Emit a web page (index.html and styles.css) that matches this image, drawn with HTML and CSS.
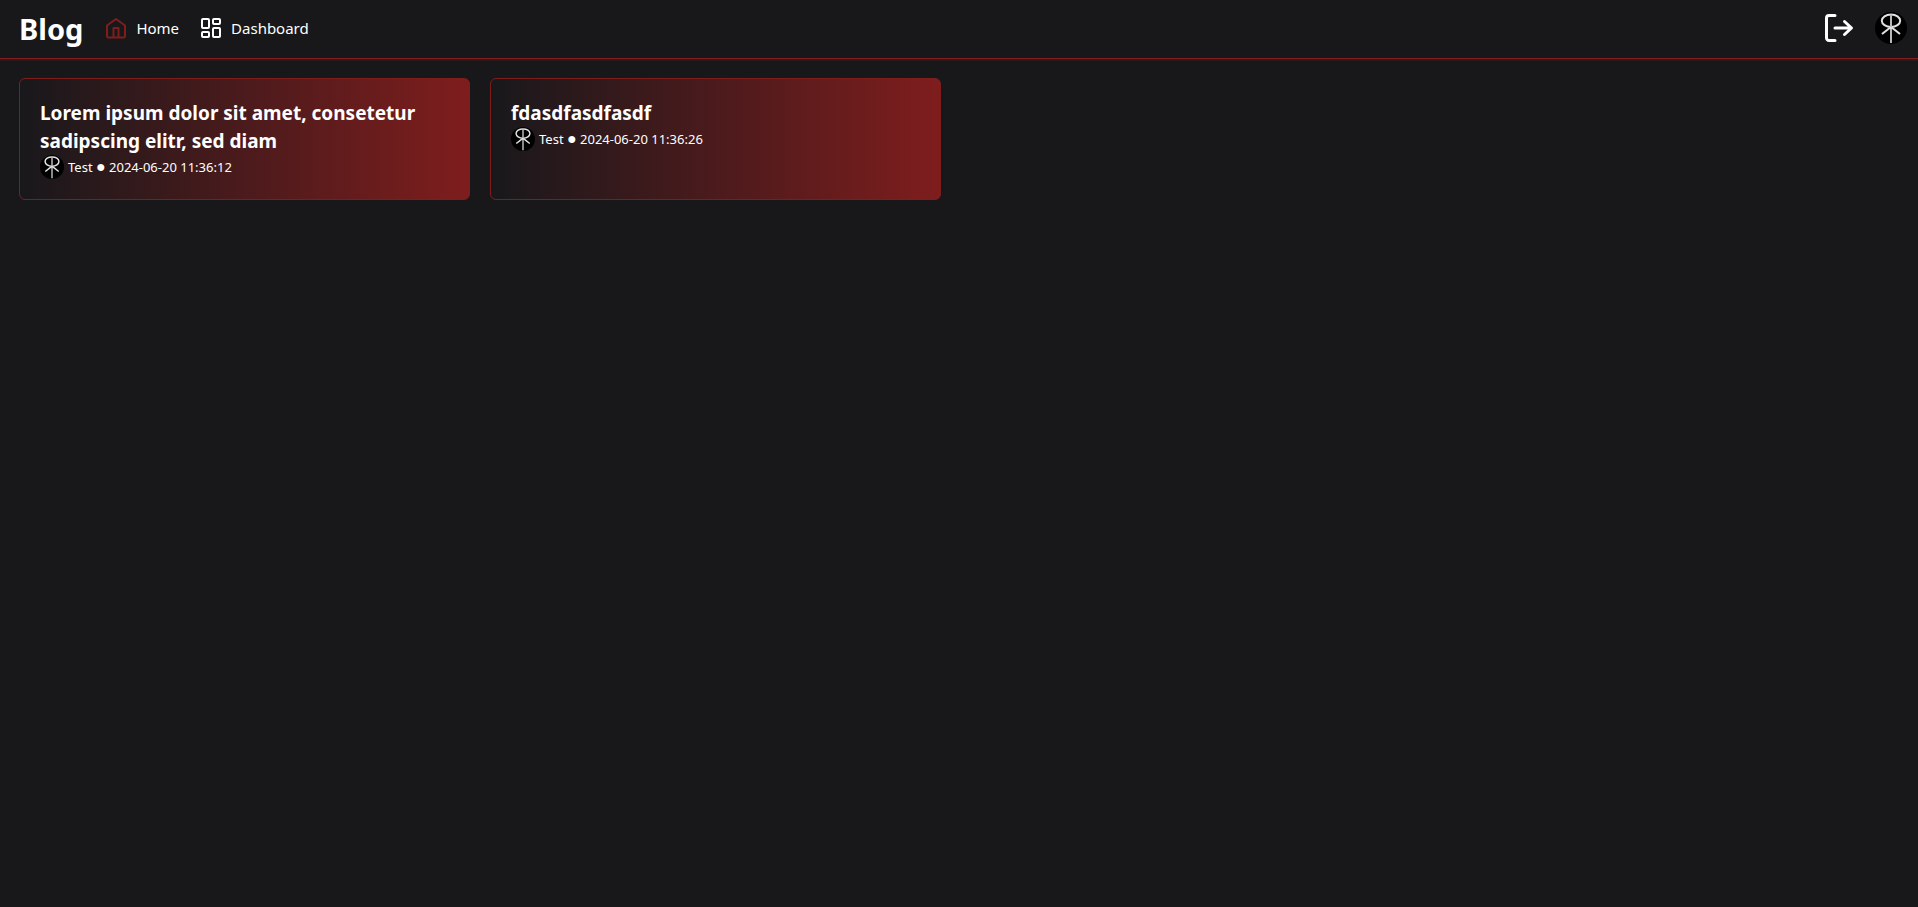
FILE: index.html
```
<!DOCTYPE html>
<html lang="en">
<head>
<meta charset="utf-8">
<title>Blog</title>
<link rel="stylesheet" href="styles.css">
</head>
<body>
<svg class="sprite" aria-hidden="true">
  <symbol id="avatar" viewBox="0 0 32 32">
    <circle cx="16" cy="16" r="16" fill="#000"/>
    <g fill="none" stroke="#e2e2e2" stroke-width="2">
      <ellipse cx="16" cy="8.7" rx="9.2" ry="6.2"/>
      <path d="M16 2.5V31" stroke="#b8b8b8"/>
      <path d="M7 22 14 16.500Q16 15 18 16.500L25 22"/>
    </g>
  </symbol>
</svg>
<header class="header">
  <a class="brand" href="#">Blog</a>
  <nav class="nav">
    <a class="nav-link" href="#">
      <svg class="icon icon-home" viewBox="0 0 24 24"><path d="M3 9.500 12 3l9 6.500V20a1.500 1.500 0 0 1-1.500 1.500h-15A1.500 1.500 0 0 1 3 20Z"/><path d="M9.500 21v-9h5v9"/></svg>
      <span>Home</span>
    </a>
    <a class="nav-link" href="#">
      <svg class="icon" viewBox="0 0 24 24"><rect x="3" y="3" width="7" height="9" rx="1"/><rect x="14" y="3" width="7" height="5" rx="1"/><rect x="14" y="12" width="7" height="9" rx="1"/><rect x="3" y="16" width="7" height="5" rx="1"/></svg>
      <span>Dashboard</span>
    </a>
  </nav>
  <div class="actions">
    <button class="logout" type="button" aria-label="Log out">
      <svg class="icon icon-logout" viewBox="0 0 32 32"><path d="M12 3.500H6a2.500 2.500 0 0 0-2.500 2.500v20a2.500 2.500 0 0 0 2.500 2.500h6M12 16h16M21.500 9.500 28.500 16l-7 6.500"/></svg>
    </button>
    <svg class="avatar-large" role="img" aria-label="Profile"><use href="#avatar"/></svg>
  </div>
</header>
<main class="posts">
  <article class="card">
    <h2 class="title">Lorem ipsum dolor sit amet, consetetur sadipscing elitr, sed diam</h2>
    <div class="meta"><svg class="avatar-small" aria-hidden="true"><use href="#avatar"/></svg><span>Test <span class="dot">●</span> 2024-06-20 11:36:12</span></div>
  </article>
  <article class="card">
    <h2 class="title">fdasdfasdfasdf</h2>
    <div class="meta"><svg class="avatar-small" aria-hidden="true"><use href="#avatar"/></svg><span>Test <span class="dot">●</span> 2024-06-20 11:36:26</span></div>
  </article>
</main>
</body>
</html>
```
FILE: styles.css
```
* { box-sizing: border-box; }
body {
  margin: 0;
  min-height: 100vh;
  background: #18181b;
  color: #fff;
  font-family: "Segoe UI", "Noto Sans", "Open Sans", sans-serif;
}
.sprite { position: absolute; width: 0; height: 0; }
.header {
  display: flex;
  align-items: center;
  height: 59px;
  padding: 0 11px 3px 19px;
  border-bottom: 1px solid #7f1d1d;
  box-shadow: 0 1px 2px rgba(127, 29, 29, 0.5);
}
a { color: inherit; text-decoration: none; }
.brand { padding-top: 3px; font-size: 29px; line-height: 36px; font-weight: 700; }
.nav { display: flex; gap: 20px; margin-left: 21px; }
.nav-link { display: flex; align-items: center; gap: 8px; font-size: 15px; line-height: 24px; }
.icon {
  width: 24px;
  height: 24px;
  fill: none;
  stroke: currentColor;
  stroke-width: 2;
  stroke-linecap: round;
  stroke-linejoin: round;
}
.icon-home { color: #7f1d1d; }
.actions { display: flex; align-items: center; gap: 20px; margin-left: auto; }
.logout { display: flex; padding: 0; border: 0; background: none; color: #fff; cursor: pointer; }
.icon-logout { width: 32px; height: 32px; stroke-width: 3; }
.avatar-large { width: 32px; height: 32px; }
.posts {
  display: grid;
  grid-template-columns: repeat(4, 1fr);
  gap: 20px;
  padding: 19px 35px 19px 19px;
}
.card {
  padding: 20px;
  border: 1px solid #7f1d1d;
  border-radius: 6px;
  background: linear-gradient(to right, #18181b, #7f1d1d) border-box;
}
.title { margin: 0; font-size: 19px; line-height: 28px; font-weight: 700; }
.meta { display: flex; align-items: center; gap: 4px; font-size: 13px; line-height: 24px; }
.dot { font-size: 16px; line-height: 1; }
.avatar-small { width: 24px; height: 24px; }
```
